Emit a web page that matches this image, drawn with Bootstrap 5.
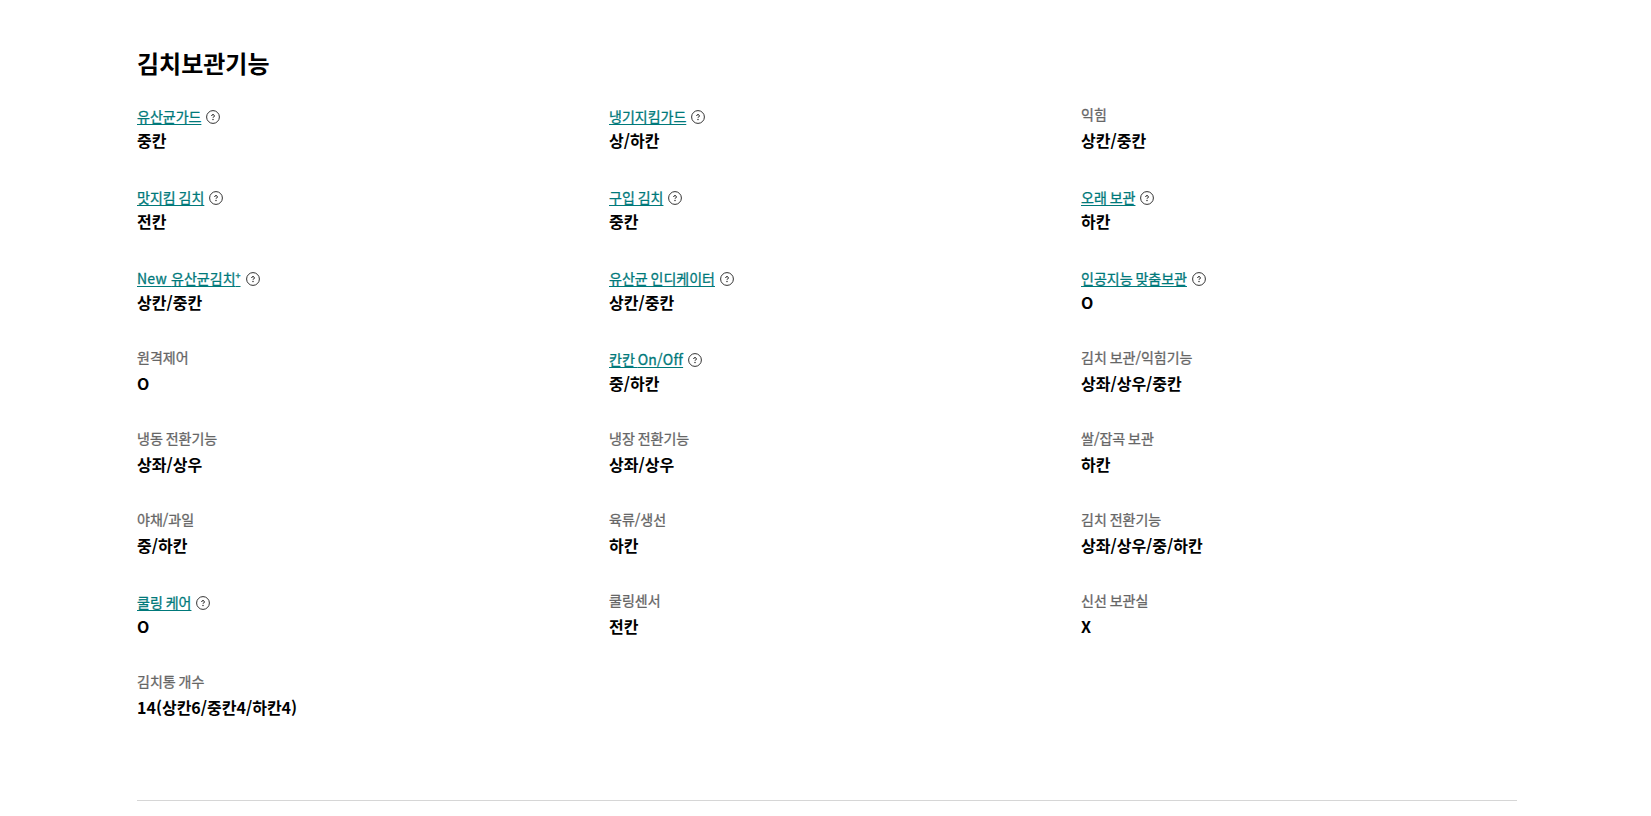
<!DOCTYPE html>
<html lang="ko"><head><meta charset="utf-8">
<link href="https://cdn.jsdelivr.net/npm/bootstrap@5.3.0/dist/css/bootstrap.min.css" rel="stylesheet">
<style>
body{font-family:"Noto Sans CJK KR","Noto Sans",sans-serif;background:#fff;color:#000;overflow:hidden;height:816px}
.spec-wrap{padding:45px 134px 0 137px}
.spec-title{font-size:24px;font-weight:700;line-height:36px;margin:0 0 23px;color:#000}
.spec-grid{display:grid;grid-template-columns:472px 472px 1fr;row-gap:0}
.spec-item{height:81px}
.spec-label{font-size:14px;line-height:24px;height:24px;color:#666;-webkit-text-stroke:.3px currentColor;word-spacing:-1px;display:flex;align-items:center;gap:5px}
.spec-plain{display:block;line-height:20px}
.spec-label a{color:#00797a;text-decoration:underline;text-underline-offset:2px}
.spec-latin{letter-spacing:.25px;word-spacing:0}
.spec-plus{font-size:9px;top:-.6em;vertical-align:baseline;position:relative;line-height:0}
.spec-value{font-size:16px;line-height:24px;font-weight:700;color:#000}
.spec-q{width:14px;height:14px;flex:none;margin-top:1px}
.spec-rule{border:0;border-top:1px solid #d6d6d6;opacity:1;margin:0}
.spec-gap{height:48px}
</style></head><body>
<svg width="0" height="0" class="d-block"><symbol id="qm" viewBox="0 0 14 14"><circle cx="7" cy="7" r="6.4" fill="none" stroke="#333" stroke-width="1"/><path d="M5.7 5.9A1.3 1.3 0 1 1 7.6 7Q7 7.3 7 7.9" fill="none" stroke="#111" stroke-width="1"/><circle cx="7" cy="9.5" r=".65" fill="#111"/></symbol></svg>
<div class="spec-wrap">
<h2 class="spec-title">김치보관기능</h2>
<div class="spec-grid">
<div class="spec-item"><div class="spec-label"><a href="#">유산균가드</a><svg class="spec-q"><use href="#qm"/></svg></div><div class="spec-value">중칸</div></div>
<div class="spec-item"><div class="spec-label"><a href="#">냉기지킴가드</a><svg class="spec-q"><use href="#qm"/></svg></div><div class="spec-value">상/하칸</div></div>
<div class="spec-item"><div class="spec-label spec-plain">익힘</div><div class="spec-value">상칸/중칸</div></div>
<div class="spec-item"><div class="spec-label"><a href="#">맛지킴 김치</a><svg class="spec-q"><use href="#qm"/></svg></div><div class="spec-value">전칸</div></div>
<div class="spec-item"><div class="spec-label"><a href="#">구입 김치</a><svg class="spec-q"><use href="#qm"/></svg></div><div class="spec-value">중칸</div></div>
<div class="spec-item"><div class="spec-label"><a href="#">오래 보관</a><svg class="spec-q"><use href="#qm"/></svg></div><div class="spec-value">하칸</div></div>
<div class="spec-item"><div class="spec-label"><a href="#"><span class="spec-latin">New </span>유산균김치<span class="spec-plus">+</span></a><svg class="spec-q"><use href="#qm"/></svg></div><div class="spec-value">상칸/중칸</div></div>
<div class="spec-item"><div class="spec-label"><a href="#">유산균 인디케이터</a><svg class="spec-q"><use href="#qm"/></svg></div><div class="spec-value">상칸/중칸</div></div>
<div class="spec-item"><div class="spec-label"><a href="#">인공지능 맞춤보관</a><svg class="spec-q"><use href="#qm"/></svg></div><div class="spec-value">O</div></div>
<div class="spec-item"><div class="spec-label spec-plain">원격제어</div><div class="spec-value">O</div></div>
<div class="spec-item"><div class="spec-label"><a href="#">칸칸 <span class="spec-latin">On/Off</span></a><svg class="spec-q"><use href="#qm"/></svg></div><div class="spec-value">중/하칸</div></div>
<div class="spec-item"><div class="spec-label spec-plain">김치 보관/익힘기능</div><div class="spec-value">상좌/상우/중칸</div></div>
<div class="spec-item"><div class="spec-label spec-plain">냉동 전환기능</div><div class="spec-value">상좌/상우</div></div>
<div class="spec-item"><div class="spec-label spec-plain">냉장 전환기능</div><div class="spec-value">상좌/상우</div></div>
<div class="spec-item"><div class="spec-label spec-plain">쌀/잡곡 보관</div><div class="spec-value">하칸</div></div>
<div class="spec-item"><div class="spec-label spec-plain">야채/과일</div><div class="spec-value">중/하칸</div></div>
<div class="spec-item"><div class="spec-label spec-plain">육류/생선</div><div class="spec-value">하칸</div></div>
<div class="spec-item"><div class="spec-label spec-plain">김치 전환기능</div><div class="spec-value">상좌/상우/중/하칸</div></div>
<div class="spec-item"><div class="spec-label"><a href="#">쿨링 케어</a><svg class="spec-q"><use href="#qm"/></svg></div><div class="spec-value">O</div></div>
<div class="spec-item"><div class="spec-label spec-plain">쿨링센서</div><div class="spec-value">전칸</div></div>
<div class="spec-item"><div class="spec-label spec-plain">신선 보관실</div><div class="spec-value">X</div></div>
<div class="spec-item"><div class="spec-label spec-plain">김치통 개수</div><div class="spec-value">14(상칸6/중칸4/하칸4)</div></div>
</div>
<div class="spec-gap"></div>
<hr class="spec-rule">
</div>
</body></html>
